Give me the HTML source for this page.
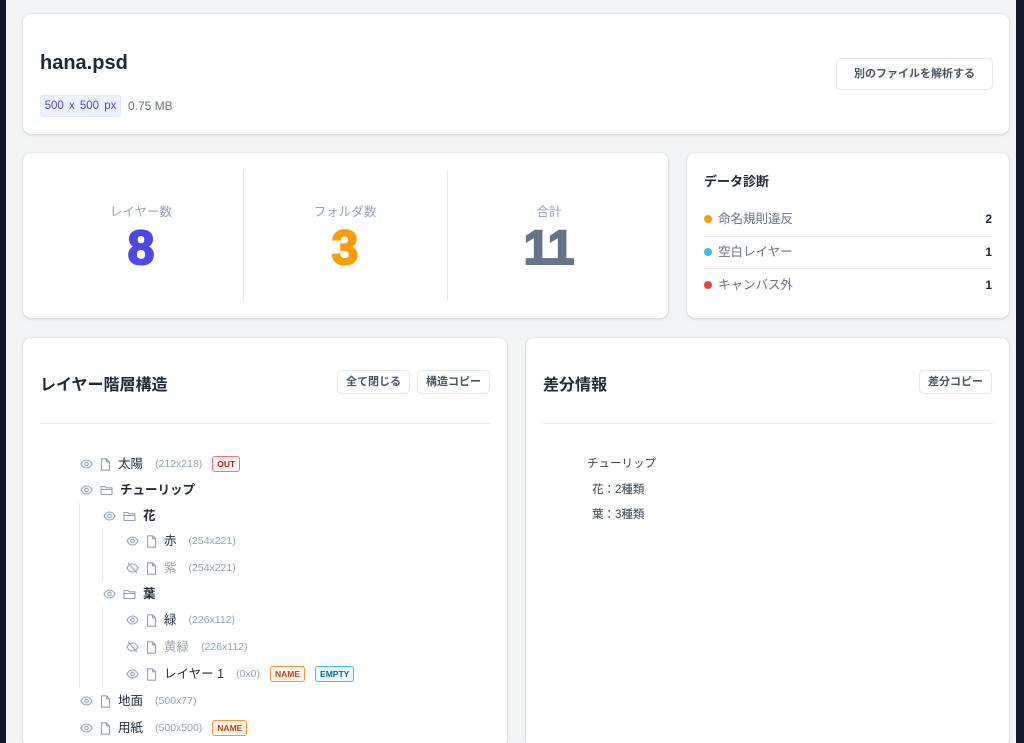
<!DOCTYPE html>
<html><head><meta charset="utf-8"><style>
*{box-sizing:border-box;margin:0;padding:0}
html,body{width:1024px;height:743px;overflow:hidden}
body{background:#f3f4f6;font-family:"Liberation Sans","Noto Sans CJK JP",sans-serif;position:relative;color:#1f2937}
.sl{position:absolute;left:0;top:0;width:6px;height:743px;background:#111827}
.sr{position:absolute;right:0;top:0;width:8px;height:743px;background:#111827}
.card{position:absolute;background:#fff;border-radius:8px;box-shadow:0 1px 3px rgba(0,0,0,.12),0 0 0 1px rgba(0,0,0,.03)}
.a{position:absolute;white-space:nowrap}
.btn{position:absolute;border:1px solid #e5e7eb;border-radius:5px;background:#fff;font-size:11px;font-weight:bold;color:#4b5563;text-align:center}
.lbl{font-size:12.5px;color:#94a3b8;text-align:center;width:204px}
.num{font-size:48px;font-weight:bold;text-align:center;width:204px;font-family:"Liberation Sans",sans-serif;line-height:50px;-webkit-text-stroke:2px currentColor}
.row{position:absolute;height:20px;display:flex;align-items:center;font-size:12.5px;white-space:nowrap;line-height:20px}
.row span{line-height:20px}
.row svg{margin-right:7px;flex:none}
.dim{font-size:10.5px;color:#94a3b8;margin-left:12px;font-family:"Liberation Sans Narrow","Liberation Sans",sans-serif}
.tag{font-size:8.5px;font-weight:bold;border:1px solid;border-radius:3px;padding:0 4px;margin-left:10px;line-height:14px!important}
.out{color:#b91c1c;border-color:#f87171;background:#fef2f2}
.nm{color:#c2410c;border-color:#fb923c;background:#fff7ed}
.em{color:#0369a1;border-color:#38bdf8;background:#f0f9ff}
.vl{position:absolute;width:1px;background:#e5e7eb}
.dot{display:inline-block;width:8px;height:8px;border-radius:50%;margin-right:6px;vertical-align:middle;position:relative;top:-1px}
.dr{position:absolute;left:17px;width:288px;font-size:12.5px;color:#6b7280;line-height:18px}
.dr b{position:absolute;right:0;top:0;color:#1f2937;font-size:12px}
</style></head><body>
<div class="sl"></div><div class="sr"></div>

<div class="card" style="left:23px;top:14px;width:986px;height:120px">
 <div class="a" style="left:17px;top:38px;font-size:20px;font-weight:bold;color:#1f2937">hana.psd</div>
 <div class="a" style="left:17px;top:81px;height:22px;width:81px;background:#eef2ff;border:1px solid #e0e7ff;border-radius:3px;font-size:11.5px;color:#4f46e5;line-height:20px;text-align:center;font-family:'Liberation Sans Narrow','Liberation Sans',sans-serif;word-spacing:2px">500 x 500 px</div>
 <div class="a" style="left:105px;top:85px;font-size:12px;color:#6b7280">0.75 MB</div>
 <div class="btn" style="left:813px;top:44px;width:157px;height:32px;line-height:30px">別のファイルを解析する</div>
</div>

<div class="card" style="left:23px;top:153px;width:645px;height:165px">
 <div class="vl" style="left:220px;top:17px;height:131px"></div>
 <div class="vl" style="left:424px;top:17px;height:131px"></div>
 <div class="a lbl" style="left:16px;top:48px">レイヤー数</div>
 <div class="a num" style="left:16px;top:71px;color:#4f46e5">8</div>
 <div class="a lbl" style="left:220px;top:48px">フォルダ数</div>
 <div class="a num" style="left:220px;top:71px;color:#f59e0b">3</div>
 <div class="a lbl" style="left:424px;top:48px">合計</div>
 <div class="a num" style="left:424px;top:71px;color:#64748b">11</div>
</div>

<div class="card" style="left:687px;top:153px;width:322px;height:165px">
 <div class="a" style="left:17px;top:18px;font-size:13px;font-weight:bold">データ診断</div>
 <div class="dr" style="top:57px"><span class="dot" style="background:#f59e0b"></span>命名規則違反<b>2</b></div>
 <div class="a" style="left:17px;top:83px;width:288px;height:1px;background:#e5e7eb"></div>
 <div class="dr" style="top:90px"><span class="dot" style="background:#38bdf8"></span>空白レイヤー<b>1</b></div>
 <div class="a" style="left:17px;top:115px;width:288px;height:1px;background:#e5e7eb"></div>
 <div class="dr" style="top:123px"><span class="dot" style="background:#ef4444"></span>キャンバス外<b>1</b></div>
</div>

<div class="card" style="left:23px;top:338px;width:484px;height:410px">
 <div class="a" style="left:17px;top:33px;font-size:16px;font-weight:bold">レイヤー階層構造</div>
 <div class="btn" style="left:314px;top:32px;width:73px;height:24px;line-height:22px">全て閉じる</div>
 <div class="btn" style="left:394px;top:32px;width:73px;height:24px;line-height:22px">構造コピー</div>
 <div class="a" style="left:17px;top:85px;width:450px;height:1px;background:#e5e7eb"></div>
 <div class="vl" style="left:56px;top:165px;height:184px"></div>
 <div class="vl" style="left:79px;top:191px;height:52px"></div>
 <div class="vl" style="left:79px;top:269px;height:80px"></div>
</div>

<div class="card" style="left:526px;top:338px;width:483px;height:410px">
 <div class="a" style="left:17px;top:33px;font-size:16px;font-weight:bold">差分情報</div>
 <div class="btn" style="left:393px;top:32px;width:73px;height:24px;line-height:22px">差分コピー</div>
 <div class="a" style="left:17px;top:85px;width:450px;height:1px;background:#e5e7eb"></div>
 <div class="a" style="left:61px;top:117px;font-size:11.5px;color:#374151">チューリップ</div>
 <div class="a" style="left:66px;top:143px;font-size:11.5px;color:#374151">花：2種類</div>
 <div class="a" style="left:66px;top:168px;font-size:11.5px;color:#374151">葉：3種類</div>
</div>

<svg width="0" height="0" style="position:absolute"><defs>
<g id="eye"><path d="M1 6C2.5 3 4.5 2 6.5 2S10.5 3 12 6C10.5 9 8.5 10 6.5 10S2.5 9 1 6Z" fill="none" stroke="#94a3b8" stroke-width="1.1"/><circle cx="6.5" cy="6" r="1.8" fill="none" stroke="#94a3b8" stroke-width="1.1"/></g>
<g id="eyeoff"><path d="M1 6C2.5 3 4.5 2 6.5 2S10.5 3 12 6C10.5 9 8.5 10 6.5 10S2.5 9 1 6Z" fill="none" stroke="#94a3b8" stroke-width="1.1"/><path d="M2 1L11 11" stroke="#94a3b8" stroke-width="1.1"/></g>
<g id="file"><path d="M1.5 .8H6.5L9.5 3.8V12.2H1.5Z M6.5 .8V3.8H9.5" fill="none" stroke="#94a3b8" stroke-width="1.1" stroke-linejoin="round"/></g>
<g id="fold"><path d="M1 2.5H5L6.2 3.8H12V10.5H1Z M1 5.5H12" fill="none" stroke="#94a3b8" stroke-width="1.1" stroke-linejoin="round"/></g>
</defs></svg>

<div class="row" style="left:80px;top:454px"><svg width="13" height="12"><use href="#eye"/></svg><svg width="11" height="13"><use href="#file"/></svg><span>太陽</span><span class="dim">(212x218)</span><span class="tag out">OUT</span></div>
<div class="row" style="left:80px;top:480px;font-weight:bold"><svg width="13" height="12"><use href="#eye"/></svg><svg width="13" height="12"><use href="#fold"/></svg><span>チューリップ</span></div>
<div class="row" style="left:103px;top:506px;font-weight:bold"><svg width="13" height="12"><use href="#eye"/></svg><svg width="13" height="12"><use href="#fold"/></svg><span>花</span></div>
<div class="row" style="left:126px;top:531px"><svg width="13" height="12"><use href="#eye"/></svg><svg width="11" height="13"><use href="#file"/></svg><span>赤</span><span class="dim">(254x221)</span></div>
<div class="row" style="left:126px;top:558px;color:#9ca3af"><svg width="13" height="12"><use href="#eyeoff"/></svg><svg width="11" height="13"><use href="#file"/></svg><span>紫</span><span class="dim">(254x221)</span></div>
<div class="row" style="left:103px;top:584px;font-weight:bold"><svg width="13" height="12"><use href="#eye"/></svg><svg width="13" height="12"><use href="#fold"/></svg><span>葉</span></div>
<div class="row" style="left:126px;top:610px"><svg width="13" height="12"><use href="#eye"/></svg><svg width="11" height="13"><use href="#file"/></svg><span>緑</span><span class="dim">(226x112)</span></div>
<div class="row" style="left:126px;top:637px;color:#9ca3af"><svg width="13" height="12"><use href="#eyeoff"/></svg><svg width="11" height="13"><use href="#file"/></svg><span>黄緑</span><span class="dim">(226x112)</span></div>
<div class="row" style="left:126px;top:664px"><svg width="13" height="12"><use href="#eye"/></svg><svg width="11" height="13"><use href="#file"/></svg><span>レイヤー 1</span><span class="dim">(0x0)</span><span class="tag nm">NAME</span><span class="tag em">EMPTY</span></div>
<div class="row" style="left:80px;top:691px"><svg width="13" height="12"><use href="#eye"/></svg><svg width="11" height="13"><use href="#file"/></svg><span>地面</span><span class="dim">(500x77)</span></div>
<div class="row" style="left:80px;top:718px"><svg width="13" height="12"><use href="#eye"/></svg><svg width="11" height="13"><use href="#file"/></svg><span>用紙</span><span class="dim">(500x500)</span><span class="tag nm">NAME</span></div>
</body></html>
